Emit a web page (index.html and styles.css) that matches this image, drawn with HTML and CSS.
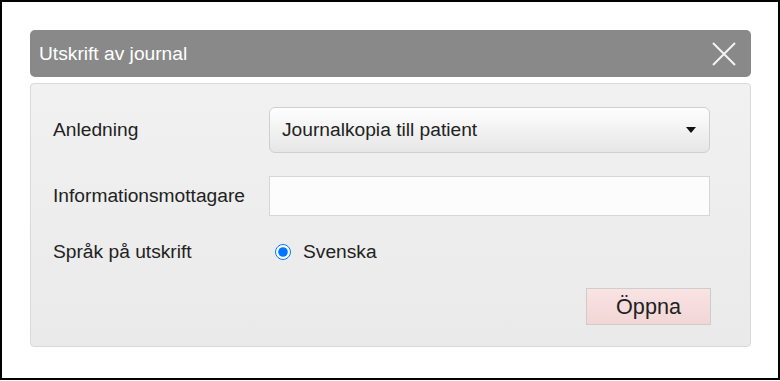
FILE: index.html
```html
<!DOCTYPE html>
<html lang="sv">
<head>
  <meta charset="UTF-8">
  <meta name="viewport" content="width=device-width, initial-scale=1.0">
  <title>Utskrift av journal</title>
  <link rel="stylesheet" href="styles.css">
</head>
<body>
  <div class="frame">
    <div class="dialog">
      <div class="dialog-header">
        <span class="dialog-title">Utskrift av journal</span>
        <button class="close-btn" type="button" aria-label="Stäng">
          <svg width="24" height="24" viewBox="0 0 24 24">
            <path d="M1 1 L23 23 M23 1 L1 23" stroke="#f4f4f4" stroke-width="2" fill="none"/>
          </svg>
        </button>
      </div>

      <form class="dialog-body">
        <label class="field-label" for="anledning">Anledning</label>
        <div class="select-box" id="anledning">
          <span>Journalkopia till patient</span>
          <span class="caret"></span>
        </div>

        <label class="field-label" for="mottagare">Informationsmottagare</label>
        <input class="text-input" type="text" id="mottagare">

        <span class="field-label">Språk på utskrift</span>
        <label class="radio-row">
          <input type="radio" name="sprak" checked>
          <span>Svenska</span>
        </label>

        <div class="actions">
          <button class="open-btn" type="button">Öppna</button>
        </div>
      </form>
    </div>
  </div>
</body>
</html>
```

FILE: styles.css
```css
body {
  margin: 0;
  padding: 0;
  font-family: "Liberation Sans", Arial, sans-serif;
  background: #fff;
}
.frame {
  width: 780px;
  height: 380px;
  box-sizing: border-box;
  border: 2px solid #000;
  padding: 28px 27px 0 28px;
}
.dialog {
  display: flex;
  flex-direction: column;
  gap: 6px;
}
.dialog-header {
  height: 47px;
  background: #898989;
  border-radius: 5px;
  display: flex;
  align-items: center;
  justify-content: space-between;
  padding: 0 15px 0 9px;
}
.dialog-title {
  color: #fff;
  font-size: 19.2px;
}
.close-btn {
  background: none;
  border: none;
  padding: 0;
  width: 24px;
  height: 24px;
  display: flex;
}
.dialog-body {
  margin: 0;
  height: 264px;
  box-sizing: border-box;
  border: 1px solid #d9d9d9;
  border-radius: 4px;
  background: linear-gradient(#f1f1f1, #eaeaea);
  padding: 23px 39px 0 22px;
  display: grid;
  grid-template-columns: 216px 1fr;
  grid-template-rows: 46px 40px 26px 37px;
  row-gap: 23px;
  align-items: center;
}
.field-label {
  font-size: 19.2px;
  color: #222;
}
.select-box {
  height: 46px;
  box-sizing: border-box;
  border: 1px solid #cfcfcf;
  border-radius: 6px;
  background: linear-gradient(#fefefe, #e6e6e6);
  display: flex;
  align-items: center;
  justify-content: space-between;
  padding: 0 13px 0 12px;
  font-size: 19.2px;
  color: #222;
  margin-right: 1px;
}
.caret {
  width: 0;
  height: 0;
  border-left: 5px solid transparent;
  border-right: 5px solid transparent;
  border-top: 6px solid #111;
}
.text-input {
  height: 40px;
  box-sizing: border-box;
  border: 1px solid #d6d6d6;
  background: #fcfcfc;
  margin: 0 1px 0 0;
  font-size: 19.2px;
}
.radio-row {
  display: flex;
  align-items: center;
  font-size: 19.2px;
  color: #222;
}
.radio-row input {
  width: 16px;
  height: 16px;
  margin: 0 12px 0 6px;
}
.actions {
  grid-column: 1 / 3;
  display: flex;
  justify-content: flex-end;
}
.open-btn {
  width: 125px;
  height: 37px;
  border: 1px solid #cdcdcd;
  background: linear-gradient(#f9e3e3, #f2d6d6);
  font-family: "Liberation Sans", Arial, sans-serif;
  font-size: 21.6px;
  color: #222;
  padding: 0;
}
```
